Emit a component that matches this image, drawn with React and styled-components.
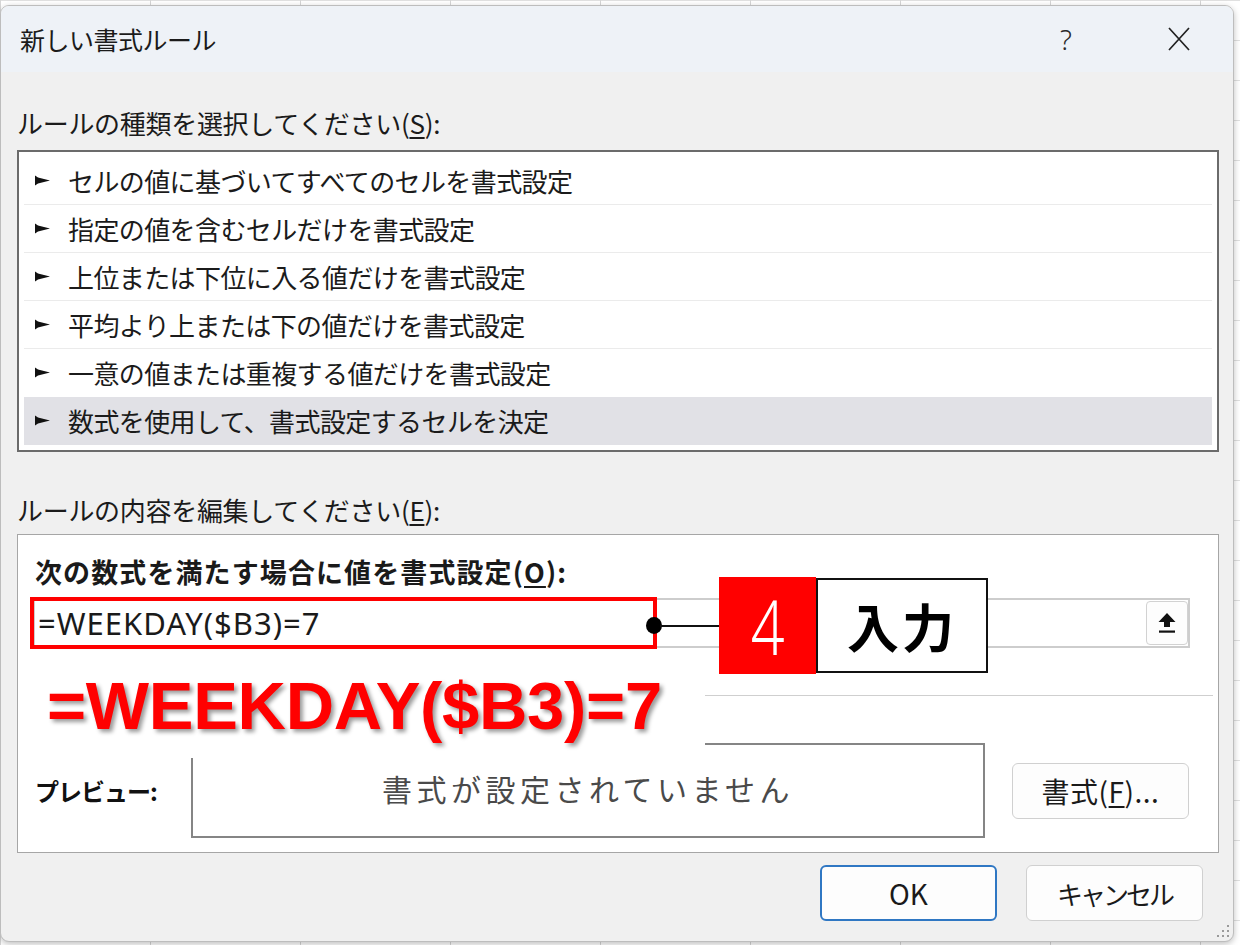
import React from 'react';
import styled, { createGlobalStyle } from 'styled-components';

const GlobalStyle = createGlobalStyle`
  html, body { margin: 0; padding: 0; }
  body {
    width: 1240px;
    height: 945px;
    overflow: hidden;
    background-color: #ffffff;
    background-image:
      linear-gradient(to right, #d6d6d6 1px, transparent 1px),
      linear-gradient(to bottom, #e0e0e0 1px, transparent 1px);
    background-size: 150px 100%, 100% 40px;
    font-family: "Noto Sans CJK JP", "Noto Sans", sans-serif;
    color: #1a1a1a;
  }
`;

const rules = [
  'セルの値に基づいてすべてのセルを書式設定',
  '指定の値を含むセルだけを書式設定',
  '上位または下位に入る値だけを書式設定',
  '平均より上または下の値だけを書式設定',
  '一意の値または重複する値だけを書式設定',
  '数式を使用して、書式設定するセルを決定',
];

const Page = styled.div`
  padding-top: 5px;
`;

const Dialog = styled.div`
  position: relative;
  box-sizing: border-box;
  width: 1234px;
  height: 937px;
  background: #f0f0f0;
  border: 1px solid #bdbdbd;
  border-radius: 9px;
  overflow: hidden;
  box-shadow: 0 2px 6px rgba(0, 0, 0, 0.25);
`;

const TitleBar = styled.div`
  display: flex;
  align-items: center;
  height: 66px;
  padding-left: 19px;
  background: #eef2f7;
`;

const Title = styled.div`
  font-size: 25px;
  letter-spacing: -0.5px;
  color: #1b1b1b;
`;

const TitleButtons = styled.div`
  display: flex;
  gap: 53px;
  margin-left: auto;
  margin-right: 24px;
`;

const TitleButton = styled.div`
  width: 60px;
  height: 40px;
  display: flex;
  align-items: center;
  justify-content: center;
  font-family: "Noto Sans", sans-serif;
  font-weight: 300;
  font-size: 28px;
  color: #2a2a2a;
`;

const Body = styled.div`
  padding: 0 14px 0 16px;
`;

const SectionLabel = styled.div`
  margin-top: ${p => p.$top}px;
  height: 34px;
  line-height: 34px;
  font-size: 26px;
  letter-spacing: -0.3px;
  color: #1b1b1b;
  u { text-underline-offset: 3px; }
`;

const RuleList = styled.div`
  margin-top: 10px;
  background: #fff;
  border: 2px solid #6b6b6b;
  padding: 5px;
`;

const RuleItem = styled.div`
  box-sizing: border-box;
  display: flex;
  align-items: center;
  gap: 18px;
  height: 48px;
  padding-left: 11px;
  font-size: 26px;
  letter-spacing: -0.6px;
  color: #1b1b1b;
  background: ${p => (p.$selected ? '#e1e1e6' : '#fff')};
  border-bottom: 1px solid ${p => (p.$last ? 'transparent' : '#ebebeb')};
  svg { flex-shrink: 0; }
`;

const EditPanel = styled.div`
  position: relative;
  box-sizing: border-box;
  height: 319px;
  margin-top: 7px;
  padding: 21px 28px 13px 15px;
  background: #fff;
  border: 1px solid #a6a6a6;
`;

const BoldLabel = styled.div`
  height: 32px;
  line-height: 32px;
  padding-left: 2px;
  font-size: 27px;
  font-weight: 700;
  letter-spacing: 1.1px;
  color: #1a1a1a;
  u { text-underline-offset: 3px; }
`;

const FormulaField = styled.div`
  box-sizing: border-box;
  display: flex;
  align-items: center;
  height: 50px;
  margin-top: 10px;
  padding-left: 3px;
  border: 2px solid #cdcdcd;
  background: #fff;
`;

const FormulaText = styled.span`
  font-family: "Noto Sans", "Open Sans", sans-serif;
  font-size: 31px;
  letter-spacing: 1px;
  color: #1a1a1a;
`;

const UploadButton = styled.div`
  box-sizing: border-box;
  display: flex;
  align-items: center;
  justify-content: center;
  width: 42px;
  height: 44px;
  margin-left: auto;
  border: 1px solid #d2d2d2;
  border-radius: 4px;
  background: #fdfdfd;
`;

const Separator = styled.div`
  height: 1px;
  margin: 47px -23px 0 0;
  background: #cfcfcf;
`;

const PreviewRow = styled.div`
  display: flex;
  align-items: center;
  margin-top: 47px;
  height: 95px;
`;

const PreviewLabel = styled.div`
  width: 156px;
  padding-left: 2px;
  font-size: 24px;
  font-weight: 700;
  letter-spacing: -1px;
  color: #111;
`;

const PreviewBox = styled.div`
  box-sizing: border-box;
  width: 794px;
  height: 95px;
  display: flex;
  align-items: center;
  justify-content: center;
  border: 2px solid #858585;
  font-size: 30px;
  letter-spacing: 4.5px;
  color: #4a4a4a;
  padding-bottom: 6px;
`;

const PushButton = styled.div`
  box-sizing: border-box;
  width: 177px;
  height: 56px;
  display: flex;
  align-items: center;
  justify-content: center;
  margin-left: ${p => p.$gap || 0}px;
  border: ${p => (p.$primary ? '2px solid #2f77c3' : '1px solid #d0d0d0')};
  border-radius: 6px;
  background: #fdfdfd;
  font-size: ${p => p.$size || 28}px;
  letter-spacing: ${p => p.$spacing || 0}px;
  color: #1a1a1a;
  u { text-underline-offset: 3px; }
`;

const Footer = styled.div`
  display: flex;
  justify-content: flex-end;
  gap: 29px;
  margin: 12px 16px 0 0;
`;

/* annotation overlays drawn on top of the dialog */

const RedFrame = styled.div`
  position: absolute;
  left: 12px;
  top: 62px;
  width: 627px;
  height: 52px;
  box-sizing: border-box;
  border: 4px solid #ff0000;
`;

const Callout = styled.div`
  position: absolute;
  left: 628px;
  top: 42px;
  height: 97px;
  display: flex;
  align-items: center;
`;

const Dot = styled.div`
  width: 16px;
  height: 17px;
  border-radius: 50%;
  background: #000;
`;

const Connector = styled.div`
  width: 59px;
  height: 2px;
  margin-left: -2px;
  background: #111;
`;

const StepNumber = styled.div`
  width: 97px;
  height: 97px;
  display: flex;
  align-items: center;
  justify-content: center;
  background: #ff0000;
  color: #fff;
  font-family: "Noto Sans", sans-serif;
  font-weight: 300;
  font-size: 76px;
  line-height: 1;
  span { display: inline-block; transform: scaleX(0.78); }
`;

const StepLabel = styled.div`
  box-sizing: border-box;
  width: 172px;
  height: 95px;
  display: flex;
  align-items: center;
  justify-content: center;
  border: 2px solid #111;
  background: #fff;
  font-size: 52px;
  font-weight: 700;
  letter-spacing: 3px;
  color: #000;
`;

const BigFormula = styled.div`
  position: absolute;
  left: 3px;
  top: 137px;
  width: 684px;
  height: 86px;
  padding-left: 26px;
  box-sizing: border-box;
  background: #fff;
  font-family: "Liberation Sans", Arial, sans-serif;
  font-weight: 700;
  font-size: 67px;
  line-height: 67px;
  letter-spacing: -0.3px;
  color: #ff0000;
  text-shadow: 3px 3px 4px rgba(0, 0, 0, 0.4);
  white-space: nowrap;
`;

const Grip = styled.svg`
  position: absolute;
  right: 3px;
  bottom: 3px;
`;

const RuleArrow = () => (
  <svg width="15" height="11" viewBox="0 0 15 11">
    <path d="M0 0.5 L3 2.5 L15 5.5 L3 8.5 L0 10.5 Z" fill="#111" />
  </svg>
);

const CloseIcon = () => (
  <svg width="24" height="24" viewBox="0 0 24 24">
    <path d="M2 1 L22 23 M22 1 L2 23" stroke="#222" strokeWidth="1.7" fill="none" />
  </svg>
);

const UploadIcon = () => (
  <svg width="22" height="24" viewBox="0 0 22 24">
    <path d="M11 2 L19.5 11 H14 V16 H8 V11 H2.5 Z" fill="#111" />
    <rect x="3" y="19.5" width="16" height="2.2" fill="#111" />
  </svg>
);

export default function App() {
  return (
    <Page>
      <GlobalStyle />
      <Dialog>
        <TitleBar>
          <Title>新しい書式ルール</Title>
          <TitleButtons>
            <TitleButton>?</TitleButton>
            <TitleButton><CloseIcon /></TitleButton>
          </TitleButtons>
        </TitleBar>

        <Body>
          <SectionLabel $top={34}>ルールの種類を選択してください(<u>S</u>):</SectionLabel>
          <RuleList>
            {rules.map((r, i) => (
              <RuleItem key={r} $selected={i === 5} $last={i >= 4}>
                <RuleArrow />
                <span>{r}</span>
              </RuleItem>
            ))}
          </RuleList>

          <SectionLabel $top={41}>ルールの内容を編集してください(<u>E</u>):</SectionLabel>
          <EditPanel>
            <BoldLabel>次の数式を満たす場合に値を書式設定(<u>O</u>):</BoldLabel>
            <FormulaField>
              <FormulaText>=WEEKDAY($B3)=7</FormulaText>
              <UploadButton><UploadIcon /></UploadButton>
            </FormulaField>
            <Separator />
            <PreviewRow>
              <PreviewLabel>プレビュー:</PreviewLabel>
              <PreviewBox>書式が設定されていません</PreviewBox>
              <PushButton $gap={27} $spacing={0.5}>書式(<u>F</u>)...</PushButton>
            </PreviewRow>

            <RedFrame />
            <BigFormula>=WEEKDAY($B3)=7</BigFormula>
            <Callout>
              <Dot />
              <Connector />
              <StepNumber><span>4</span></StepNumber>
              <StepLabel>入力</StepLabel>
            </Callout>
          </EditPanel>

          <Footer>
            <PushButton $primary>OK</PushButton>
            <PushButton $size={26} $spacing={-3}>キャンセル</PushButton>
          </Footer>
        </Body>

        <Grip width="14" height="14" viewBox="0 0 14 14">
          <g fill="#9a9a9a">
            <rect x="11" y="1" width="2" height="2" />
            <rect x="6" y="6" width="2" height="2" />
            <rect x="11" y="6" width="2" height="2" />
            <rect x="1" y="11" width="2" height="2" />
            <rect x="6" y="11" width="2" height="2" />
            <rect x="11" y="11" width="2" height="2" />
          </g>
        </Grip>
      </Dialog>
    </Page>
  );
}
